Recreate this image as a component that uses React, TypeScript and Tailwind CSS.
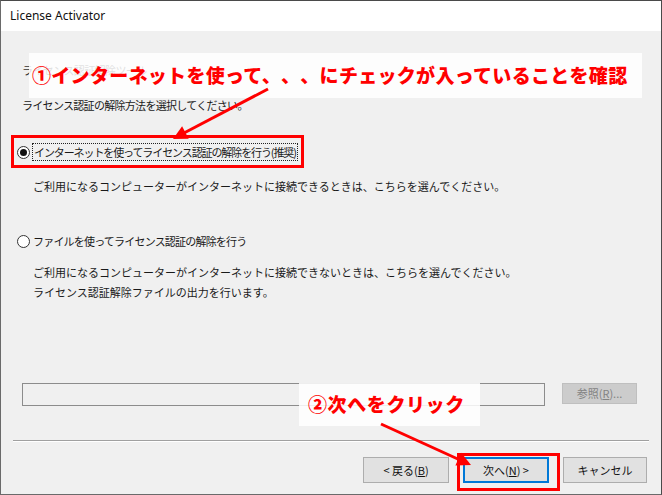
import React from 'react';

const jp = { fontFamily: '"Noto Sans CJK JP", "Noto Sans", sans-serif' };

const Radio = ({ checked }: { checked?: boolean }) => (
  <span className="w-[13px] h-[13px] rounded-full border border-[#333] bg-white flex items-center justify-center shrink-0">
    {checked && <span className="w-[7px] h-[7px] rounded-full bg-[#111]" />}
  </span>
);

const Btn = ({ children, focused, width }: { children: React.ReactNode; focused?: boolean; width: string }) => (
  <button
    className={`${width} h-[26px] bg-[#e1e1e1] text-[11px] text-[#111] flex items-center justify-center ${
      focused ? 'border-2 border-[#0078d7]' : 'border border-[#adadad]'
    }`}
    style={jp}
  >
    {children}
  </button>
);

export default function App() {
  return (
    <div className="relative w-[662px] h-[495px] border border-[#4a4a4a] border-l-[#6a6a6a] border-b-[#6a6a6a] bg-[#f0f0f0] flex flex-col overflow-hidden">
      {/* title bar */}
      <div className="h-[30px] bg-white flex items-center pl-[9px] shrink-0">
        <span className="text-[12px] text-[#111]" style={{ fontFamily: '"Noto Sans", "Open Sans", sans-serif' }}>
          License Activator
        </span>
      </div>

      <div className="flex flex-col text-[11px] text-[#1a1a1a]" style={jp}>
        <div className="mt-[31px] pl-[21px] leading-[16px] text-[#333] tracking-[-0.6px]">ライセンス認証解除ツール</div>
        <div className="mt-[19px] pl-[21px] leading-[16px] tracking-[-0.7px]">ライセンス認証の解除方法を選択してください。</div>

        <div className="mt-[29px] h-[20px] flex items-center pl-[16px] gap-[2px]">
          <Radio checked />
          <span className="border border-dotted border-[#222] px-[1px] leading-[16px] tracking-[-1.1px]">
            インターネットを使ってライセンス認証の解除を行う(推奨)
          </span>
        </div>
        <div className="mt-[16px] pl-[32px] leading-[16px]">
          ご利用になるコンピューターがインターネットに接続できるときは、こちらを選んでください。
        </div>

        <div className="mt-[37px] h-[20px] flex items-center pl-[16px] gap-[3px]">
          <Radio />
          <span className="leading-[16px] tracking-[-0.8px]">ファイルを使ってライセンス認証の解除を行う</span>
        </div>
        <div className="mt-[11px] pl-[32px] leading-[20px]">
          <div>ご利用になるコンピューターがインターネットに接続できないときは、こちらを選んでください。</div>
          <div>ライセンス認証解除ファイルの出力を行います。</div>
        </div>

        <div className="mt-[81px] flex items-start pl-[21px] pr-[24px] justify-between">
          <div className="w-[523px] h-[23px] border border-[#8c8c8c] bg-[#f0f0f0]" />
          <button className="w-[75px] h-[21px] bg-[#cccccc] border border-[#bfbfbf] text-[#838383] text-[11px]" style={jp}>
            参照(<span className="underline">R</span>)...
          </button>
        </div>

        <div className="mt-[34px] mx-[12px] h-px bg-[#a0a0a0] border-b border-white box-content" />

        <div className="mt-[15px] flex justify-end pr-[14px] gap-[14px]">
          <Btn width="w-[86px]">
            &lt; 戻る(<span className="underline">B</span>)
          </Btn>
          <Btn width="w-[86px]" focused>
            次へ(<span className="underline">N</span>) &gt;
          </Btn>
          <Btn width="w-[84px]">キャンセル</Btn>
        </div>
      </div>

      {/* annotations */}
      <div
        className="absolute left-[28px] top-[52px] w-[613px] h-[45px] bg-white/85 flex items-center pl-[3px] text-[19px] font-black text-[#ff0000] tracking-[0.3px] [text-spacing-trim:space-all]"
        style={jp}
      >
        ①インターネットを使って、、、にチェックが入っていることを確認
      </div>
      <div
        className="absolute left-[298px] top-[382px] w-[181px] h-[43px] bg-white/85 flex items-center pl-[9px] text-[19px] font-black text-[#ff0000] tracking-[0.6px]"
        style={jp}
      >
        ②次へをクリック
      </div>

      <div className="absolute left-[10px] top-[134px] w-[293px] h-[33px] border-[3px] border-[#ff0000]" />
      <div className="absolute left-[456px] top-[452px] w-[103px] h-[38px] border-[3px] border-[#ff0000]" />

      <svg className="absolute left-0 top-0 pointer-events-none" width="662" height="495">
        <line x1="267" y1="88" x2="183" y2="132" stroke="#ff0000" strokeWidth="3" />
        <polygon points="172,138 187.7,137.7 181.1,125.3" fill="#ff0000" />
        <line x1="380" y1="423" x2="459" y2="459" stroke="#ff0000" strokeWidth="3" />
        <polygon points="470,464 454.4,464.6 460.2,451.8" fill="#ff0000" />
      </svg>
    </div>
  );
}
